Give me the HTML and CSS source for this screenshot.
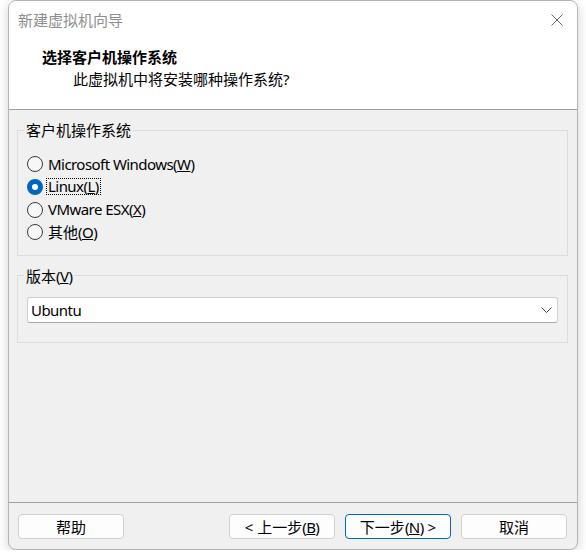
FILE: index.html
```html
<!DOCTYPE html>
<html lang="zh-CN">
<head>
<meta charset="utf-8">
<title>新建虚拟机向导</title>
<link rel="stylesheet" href="styles.css">
</head>
<body>
<div class="window">
  <div class="titlebar">
    <span class="title">新建虚拟机向导</span>
    <svg class="close" width="12" height="12" viewBox="0 0 12 12"><path d="M0.5 0.5 L11.5 11.5 M11.5 0.5 L0.5 11.5" stroke="#666" stroke-width="1" fill="none"/></svg>
  </div>
  <div class="header">
    <div class="h-title">选择客户机操作系统</div>
    <div class="h-sub">此虚拟机中将安装哪种操作系统<span class="en">?</span></div>
  </div>
  <div class="content">
    <fieldset class="group os">
      <legend>客户机操作系统</legend>
      <div class="radio"><span class="dot"></span><span class="lbl en">Microsoft Windows(<u>W</u>)</span></div>
      <div class="radio"><span class="dot checked"></span><span class="lbl focus en">Linux(<u>L</u>)</span></div>
      <div class="radio"><span class="dot"></span><span class="lbl en">VMware ESX(<u>X</u>)</span></div>
      <div class="radio"><span class="dot"></span><span class="lbl">其他<span class="en">(<u>O</u>)</span></span></div>
    </fieldset>
    <fieldset class="group ver">
      <legend>版本<span class="en">(<u>V</u>)</span></legend>
      <div class="combo">
        <span class="en">Ubuntu</span>
        <svg width="11" height="6" viewBox="0 0 11 6"><path d="M0.5 0.5 L5.5 5.5 L10.5 0.5" stroke="#444" stroke-width="1" fill="none"/></svg>
      </div>
    </fieldset>
  </div>
  <div class="footer">
    <button class="btn">帮助</button>
    <div class="spacer"></div>
    <button class="btn">&lt;&nbsp;上一步<span class="en">(<u>B</u>)</span></button>
    <button class="btn default">下一步<span class="en">(<u>N</u>)</span>&nbsp;&gt;</button>
    <button class="btn">取消</button>
  </div>
</div>
</body>
</html>
```
FILE: styles.css
```css
html, body {
  margin: 0;
  padding: 0;
  background: #ffffff;
}
body {
  font-family: "Noto Sans", "Noto Sans CJK SC", sans-serif;
  font-size: 15px;
  color: #000;
}
.en {
  letter-spacing: -0.55px;
}
.window {
  margin-left: 8px;
  width: 570px;
  height: 550px;
  box-sizing: border-box;
  border: 1px solid #b4b4b4;
  border-radius: 8px;
  box-shadow: 0 3px 12px rgba(0,0,0,0.18);
  overflow: hidden;
  display: flex;
  flex-direction: column;
  background: #f0f0f0;
}
.titlebar {
  height: 37px;
  flex: none;
  display: flex;
  align-items: center;
  justify-content: space-between;
  padding: 0 14px 0 9px;
  background: #fff;
}
.title {
  color: #8e8e8e;
  line-height: 20px;
}
.header {
  height: 72px;
  flex: none;
  box-sizing: border-box;
  padding: 8px 0 0 33px;
  background: #fff;
  border-bottom: 1px solid #a0a0a0;
}
.h-title {
  font-weight: bold;
  line-height: 22px;
}
.h-sub {
  line-height: 22px;
  padding-left: 31px;
}
.content {
  flex: 1;
  padding: 10px 9px 0 8px;
}
.group {
  margin: 0;
  border: 1px solid #dcdcdc;
  padding: 0 6px;
  min-width: 0;
}
.group legend {
  padding: 0 2px;
  line-height: 20px;
}
.os {
  padding-top: 13px;
  padding-bottom: 11px;
}
.radio {
  height: 22.67px;
  display: flex;
  align-items: center;
  padding-left: 3px;
}
.dot {
  width: 16px;
  height: 16px;
  box-sizing: border-box;
  border: 1px solid #3a3a3a;
  border-radius: 50%;
  background: #f7f7f7;
  margin-right: 3px;
  flex: none;
}
.dot.checked {
  border: 5px solid #0067c0;
  background: #fff;
}
.lbl {
  padding: 0 1px;
  line-height: 15px;
  border: 1px dotted transparent;
}
.lbl.focus {
  border-color: #000;
}
.ver {
  margin-top: 10px;
  padding-top: 11px;
  padding-bottom: 19px;
}
.combo {
  margin: 0 3px;
  height: 26px;
  box-sizing: border-box;
  background: #fff;
  border: 1px solid #d0d0d0;
  border-bottom-color: #a8a8a8;
  border-radius: 3px;
  display: flex;
  align-items: center;
  justify-content: space-between;
  padding: 0 5px 0 3px;
}
.footer {
  height: 47px;
  flex: none;
  box-sizing: border-box;
  border-top: 1px solid #a0a0a0;
  padding: 11px 10px 0 9px;
  display: flex;
  align-items: flex-start;
  gap: 10px;
}
.spacer {
  flex: 1;
}
.btn {
  width: 106px;
  height: 25px;
  box-sizing: border-box;
  background: #fdfdfd;
  border: 1px solid #d0d0d0;
  border-radius: 4px;
  font-family: inherit;
  font-size: 15px;
  color: #000;
  padding: 0;
  line-height: 20px;
}
.btn.default {
  border-color: #0067c0;
}
```
